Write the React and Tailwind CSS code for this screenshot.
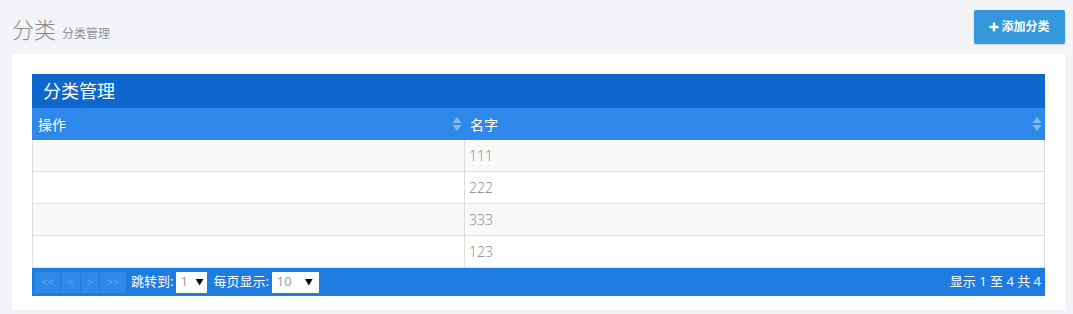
import React from "react";

const rows = ["111", "222", "333", "123"];

function SortIcon() {
  return (
    <svg width="10" height="16" viewBox="0 0 10 16" className="shrink-0">
      <path d="M5 1 L9.5 7 L0.5 7 Z" fill="#86b9ee" />
      <path d="M5 15 L9.5 9 L0.5 9 Z" fill="#86b9ee" />
    </svg>
  );
}

export default function App() {
  return (
    <div
      className="w-[1073px] h-[314px] bg-[#f3f4f7] pl-[12px] pr-[8px] overflow-hidden"
      style={{ fontFamily: '"Open Sans","Noto Sans CJK SC",sans-serif' }}
    >
      <div className="flex items-start justify-between h-[54px]">
        <div className="flex items-baseline gap-[6px] pt-[18px]">
          <span className="text-[22px] font-light text-[#8c8c8c] leading-none">分类</span>
          <span className="text-[12px] text-[#8e9296] leading-none">分类管理</span>
        </div>
        <button className="mt-[10px] h-[34px] w-[91px] rounded-[2px] bg-[#3598dc] text-white text-[12px] font-bold flex items-center justify-center gap-[2px] shadow-[0_1px_2px_rgba(0,0,0,0.15)]">
          <svg width="10" height="10" viewBox="0 0 10 10">
            <path d="M3.8 0.5 H6.2 V3.8 H9.5 V6.2 H6.2 V9.5 H3.8 V6.2 H0.5 V3.8 H3.8 Z" fill="white" />
          </svg>
          <span>添加分类</span>
        </button>
      </div>
      <div className="bg-white w-[1053px] pt-[20px] px-[20px] pb-[14px]">
        <div className="w-[1013px]">
          <div className="h-[34px] bg-[#0d67cd] flex items-center pl-[11px] text-white text-[18px] leading-none">
            分类管理
          </div>
          <div className="h-[32px] bg-[#2e88e9] flex text-white text-[14px]">
            <div className="w-[433px] flex items-center justify-between pl-[6px] pr-[3px]">
              <span>操作</span>
              <SortIcon />
            </div>
            <div className="flex-1 flex items-center justify-between pl-[5px] pr-[3px]">
              <span>名字</span>
              <SortIcon />
            </div>
          </div>
          <div className="border-x border-[#dddddd]">
            {rows.map((r, i) => (
              <div
                key={r}
                className={`h-[32px] flex border-b border-[#dddddd] ${i % 2 === 0 ? "bg-[#f9f9f9]" : "bg-white"}`}
              >
                <div className="w-[432px] border-r border-[#dddddd]"></div>
                <div className="flex-1 flex items-center pl-[4px] text-[14px] font-light text-[#858585]">{r}</div>
              </div>
            ))}
          </div>
          <div className="h-[28px] bg-[#1e7ce1] flex items-center justify-between pl-[3px] pr-[4px] text-white text-[13px]">
            <div className="flex items-center">
              <div className="flex items-center gap-[1px]">
                <span className="w-[25px] h-[21px] bg-[#2f89e8] text-[#6aaaf0] flex items-center justify-center text-[11px]">&lt;&lt;</span>
                <span className="w-[19px] h-[21px] bg-[#2f89e8] text-[#6aaaf0] flex items-center justify-center text-[11px]">&lt;</span>
                <span className="w-[18px] h-[21px] bg-[#2f89e8] text-[#6aaaf0] flex items-center justify-center text-[11px]">&gt;</span>
                <span className="w-[26px] h-[21px] bg-[#2f89e8] text-[#6aaaf0] flex items-center justify-center text-[11px]">&gt;&gt;</span>
              </div>
              <span className="ml-[5px]">跳转到:</span>
              <div className="ml-[3px] w-[31px] h-[21px] bg-white flex items-center justify-between pl-[4px] pr-[4px] text-[#9a9a9a]">
                <span>1</span>
                <span className="text-black text-[8px]">▼</span>
              </div>
              <span className="ml-[6px]">每页显示:</span>
              <div className="ml-[3px] w-[47px] h-[21px] bg-white flex items-center justify-between pl-[5px] pr-[6px] text-[#9a9a9a]">
                <span>10</span>
                <span className="text-black text-[8px]">▼</span>
              </div>
            </div>
            <span>显示 1 至 4 共 4</span>
          </div>
        </div>
      </div>
    </div>
  );
}
